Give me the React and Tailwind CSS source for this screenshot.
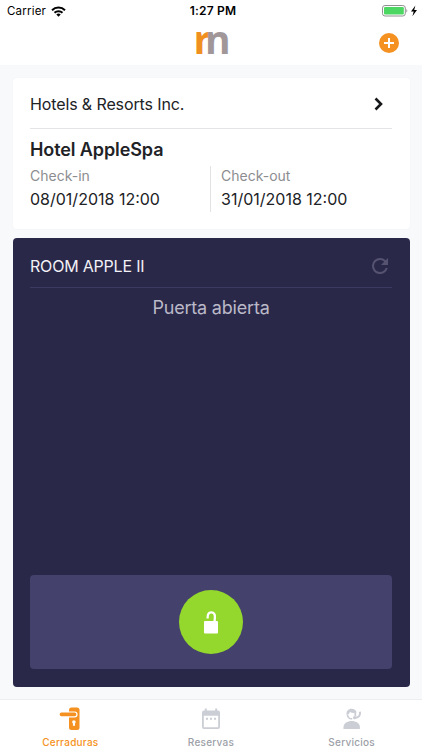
import { useState } from "react";

const tabs = [
  { id: "locks", label: "Cerraduras", Icon: LockIcon },
  { id: "bookings", label: "Reservas", Icon: CalendarIcon },
  { id: "services", label: "Servicios", Icon: ServiceIcon },
];

function LockIcon() {
  return (
    <svg width="22" height="24" viewBox="0 0 22 24">
      <rect x="10" y="0.5" width="10.5" height="22.5" rx="2.5" fill="currentColor" />
      <path d="M0 4.400h15.600a3 3 0 0 1 0 6H0z" fill="#fff" />
      <rect x="0.7" y="5.5" width="16.6" height="3.8" rx="1.7" fill="currentColor" />
      <circle cx="14.9" cy="15" r="1.800" fill="#fff" />
      <path d="M14.200 15h1.500l.4 3.700h-2.300z" fill="#fff" />
    </svg>
  );
}

function CalendarIcon() {
  return (
    <svg width="22" height="24" viewBox="0 0 22 24">
      <path
        fill="currentColor"
        fillRule="evenodd"
        d="M4.800 1.500h2v2h8.400v-2h2v2h.8a2 2 0 0 1 2 2v14.500a2 2 0 0 1-2 2H4a2 2 0 0 1-2-2V5.500a2 2 0 0 1 2-2h.8zM3.800 8.700v11.500h14.400V8.700z"
      />
      <path d="M6 10.700h2v2H6zM10 10.700h2v2h-2zM14 10.700h2v2h-2z" fill="currentColor" />
    </svg>
  );
}

function ServiceIcon() {
  return (
    <svg width="22" height="24" viewBox="0 0 22 24">
      <path d="M2.500 22v-2c0-3.800 4-6 8.200-6s8.200 2.200 8.200 6v2z" fill="currentColor" />
      <path d="M5.600 7.800C5 4 7.300 1.700 10.600 1.700c2.500 0 4.300 1.300 5 3.600-2.400 1-4.800.7-6.600-.4-.6 1.600-1.700 2.600-3.400 2.900z" fill="currentColor" />
      <path d="M6.400 7.500c.4 3.100 2.200 4.500 4.800 4.300" fill="none" stroke="currentColor" strokeWidth="1.600" />
      <path d="M14.300 5v4.300" fill="none" stroke="currentColor" strokeWidth="1.800" />
      <path d="M18.900 4.800c.9 3.400-1.200 5.900-5.200 6.100" fill="none" stroke="currentColor" strokeWidth="2" />
      <circle cx="13.600" cy="10.700" r="1.600" fill="currentColor" />
    </svg>
  );
}

function StatusBar() {
  return (
    <div className="grid h-[22px] grid-cols-3 items-center pl-[7px] pr-1 leading-[22px] text-black">
      <div className="flex items-center gap-[5px]">
        <span className="text-[11.500px] tracking-[0.200px]">Carrier</span>
        <svg width="15" height="11" viewBox="0 0 15 11" fill="none" stroke="currentColor" strokeWidth="2">
          <path d="M1 4.200a9.200 9.200 0 0 1 13 0M3.500 6.800a5.700 5.700 0 0 1 8 0" />
          <path d="M7.500 10.700 5.300 8.500a3.100 3.100 0 0 1 4.400 0z" fill="currentColor" stroke="none" />
        </svg>
      </div>
      <span className="pl-px text-center text-[12px] font-semibold tracking-[0.200px]">1:27 PM</span>
      <div className="flex items-center justify-end">
        <svg width="36" height="13" viewBox="0 0 36 13">
          <rect x="0.500" y="0.500" width="22.800" height="10.500" rx="2.500" fill="#fff" stroke="#919191" />
          <rect x="2" y="2" width="19.800" height="7.500" rx="1.200" fill="#4cd662" />
          <path d="M24.400 4v3.500c1.200-.4 1.200-3.100 0-3.500z" fill="#919191" />
          <path d="M33.400 0.600 29 6.500h2.700l-1.300 4.700L35 5h-2.800z" fill="#000" />
        </svg>
      </div>
    </div>
  );
}

// the two letters of the mark are set tight, the arm of the r touches the n
function Logo() {
  return (
    <div className="-mt-[8px] flex h-[26px] w-[34px] items-center font-['Open_Sans','Liberation_Sans',sans-serif] text-[39px] leading-[26px] font-bold">
      <span className="-ml-[0.500px] w-[11.500px] text-[#f0901e]">r</span>
      <span className="text-[#a19799]">n</span>
    </div>
  );
}

function Header() {
  return (
    <header className="h-[65px] bg-white">
      <StatusBar />
      <div className="grid h-[42px] grid-cols-[1fr_auto_1fr] items-center">
        <span />
        <Logo />
        <button className="mr-[23px] flex size-5 items-center justify-center justify-self-end rounded-full bg-[#f59120] text-white">
          <svg width="12" height="12" viewBox="0 0 12 12" stroke="currentColor" strokeWidth="2">
            <path d="M6 1v10M1 6h10" />
          </svg>
        </button>
      </div>
    </header>
  );
}

function BookingCard() {
  return (
    <section className="h-[151px] rounded bg-white px-[17.500px] text-[#212226] shadow-[0_0_2px_rgba(0,0,0,0.04)]">
      <div className="flex h-[51px] items-center justify-between border-b border-[#e4e4e6] pt-[2px]">
        <span className="text-[16px] tracking-[-0.120px]">Hotels &amp; Resorts Inc.</span>
        <svg width="10" height="14" viewBox="0 0 10 14" className="mr-[8px]" fill="none" stroke="#161719" strokeWidth="2.600">
          <path d="m1.500 1.500 5.500 5.500-5.500 5.500" />
        </svg>
      </div>
      <h1 className="mt-[9px] text-[18px] leading-6 font-semibold tracking-[-0.100px]">Hotel AppleSpa</h1>
      <div className="mt-[4px] flex h-[46px]">
        <div className="w-1/2 border-r border-[#e2e2e5]">
          <p className="text-[14px] leading-5 text-[#8c8d90]">Check-in</p>
          <p className="mt-[1px] text-[16px] leading-6">08/01/2018 12:00</p>
        </div>
        <div className="w-1/2 pl-[10px]">
          <p className="text-[14px] leading-5 text-[#8c8d90]">Check-out</p>
          <p className="mt-[1px] text-[16px] leading-6">31/01/2018 12:00</p>
        </div>
      </div>
    </section>
  );
}

function RoomCard() {
  return (
    <section className="mt-[9px] flex h-[449px] flex-col rounded bg-[#2a2848] px-[17.500px] pb-[18px]">
      <div className="flex h-[50px] items-center justify-between border-b border-[#3d3961] pt-[6px]">
        <span className="text-[16px] tracking-[-0.200px] text-[#f2f1f6]">ROOM APPLE II</span>
        <svg width="24" height="24" viewBox="0 0 24 24" fill="#565371">
          <path d="M17.650 6.350A7.960 7.960 0 0 0 12 4a8 8 0 1 0 7.730 10h-2.080A6 6 0 1 1 12 6c1.660 0 3.140.690 4.220 1.780L13 11h7V4z" />
        </svg>
      </div>
      <p className="mt-[8px] text-center text-[18px] leading-6 tracking-[-0.200px] text-[#bab9c8]">Puerta abierta</p>
      <div className="mt-auto flex h-[94px] items-center justify-center rounded bg-[#44416c]">
        <button className="flex size-[64.500px] items-center justify-center rounded-full bg-[#94d82d] text-white">
          <svg width="16" height="24" viewBox="0 0 16 24">
            <rect x="1" y="11" width="14" height="12.500" rx="1" fill="currentColor" />
            <path d="M4.600 8.500c-.2-4 1-6.200 3.700-6.100 2.900.1 3.800 2.100 3.600 5.100l-.4 4.500" fill="none" stroke="currentColor" strokeWidth="2.300" />
          </svg>
        </button>
      </div>
    </section>
  );
}

export default function App() {
  const [active, setActive] = useState("locks");

  return (
    <div className="flex h-[750px] w-[422px] flex-col overflow-hidden bg-[#f7f9fb] font-['Inter','Liberation_Sans',sans-serif]">
      <Header />
      <main className="flex-1 px-[12.500px] pt-[13px]">
        <BookingCard />
        <RoomCard />
      </main>
      <nav className="grid h-[51px] grid-cols-3 border-t border-[#eceef0] bg-white">
        {tabs.map(({ id, label, Icon }) => (
          <button
            key={id}
            onClick={() => setActive(id)}
            className={`flex flex-col items-center pt-[7px] ${active === id ? "text-[#f59120]" : "text-[#cbced5]"}`}
          >
            <Icon />
            <span className={`mt-[5px] text-[10px] leading-3 font-medium tracking-[0.250px] ${active === id ? "" : "text-[#9c9fa7]"}`}>
              {label}
            </span>
          </button>
        ))}
      </nav>
    </div>
  );
}
